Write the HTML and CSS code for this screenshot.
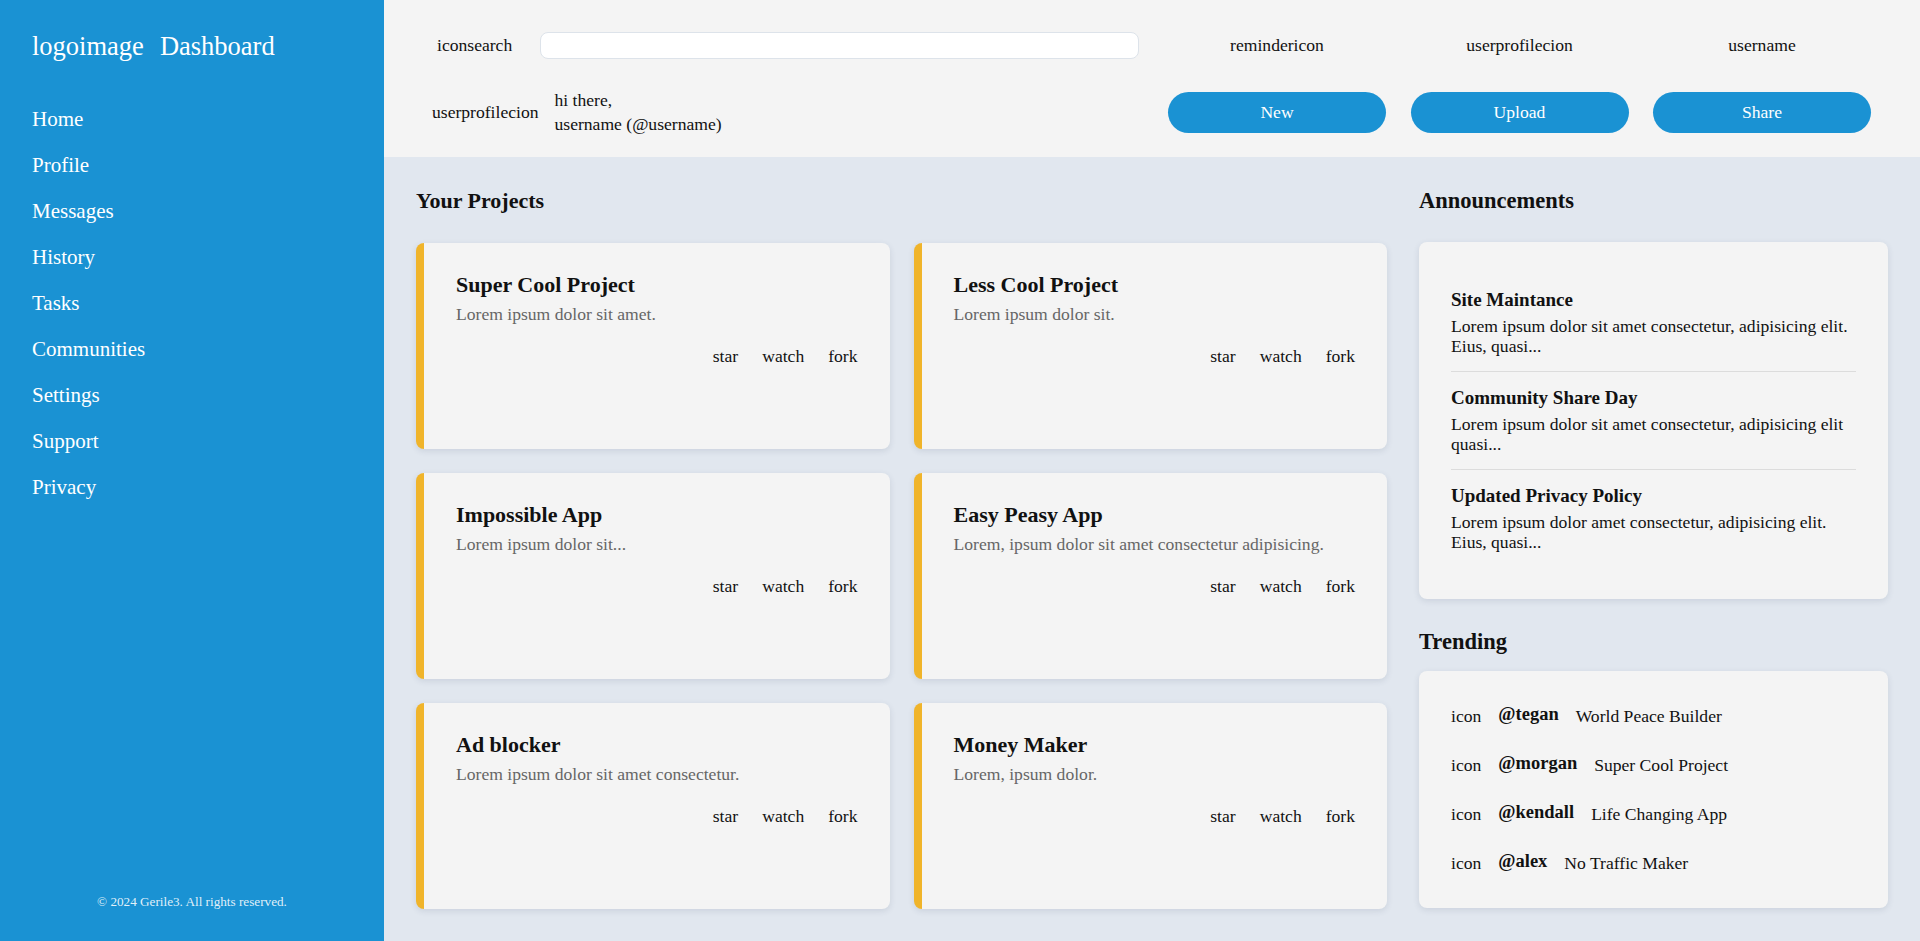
FILE: index.html
```html
<!DOCTYPE html>
<html lang="en">
<head>
<meta charset="utf-8">
<title>Dashboard</title>
<link rel="stylesheet" href="styles.css">
</head>
<body>
<div class="app">
  <aside class="sidebar">
    <div class="logo">
      <span>logoimage</span>
      <span>Dashboard</span>
    </div>
    <nav class="nav">
      <a href="#">Home</a>
      <a href="#">Profile</a>
      <a href="#">Messages</a>
      <a href="#">History</a>
      <a href="#">Tasks</a>
      <a href="#">Communities</a>
      <a href="#">Settings</a>
      <a href="#">Support</a>
      <a href="#">Privacy</a>
    </nav>
    <p class="copyright">© 2024 Gerile3. All rights reserved.</p>
  </aside>

  <div class="content">
    <header class="topbar">
      <div class="topbar-row row-top">
        <div class="search">
          <span class="search-icon">iconsearch</span>
          <input class="search-input" type="text">
        </div>
        <span class="top-cell">remindericon</span>
        <span class="top-cell">userprofilecion</span>
        <span class="top-cell">username</span>
      </div>
      <div class="topbar-row row-bottom">
        <div class="greeting">
          <span class="greeting-icon">userprofilecion</span>
          <div class="greeting-text">
            <div>hi there,</div>
            <div>username (@username)</div>
          </div>
        </div>
        <button class="btn">New</button>
        <button class="btn">Upload</button>
        <button class="btn">Share</button>
      </div>
    </header>

    <main class="main">
      <section class="projects">
        <h2 class="section-title">Your Projects</h2>
        <div class="project-grid">
          <article class="project-card">
            <h3 class="project-title">Super Cool Project</h3>
            <p class="project-desc">Lorem ipsum dolor sit amet.</p>
            <div class="project-actions"><span>star</span><span>watch</span><span>fork</span></div>
          </article>
          <article class="project-card">
            <h3 class="project-title">Less Cool Project</h3>
            <p class="project-desc">Lorem ipsum dolor sit.</p>
            <div class="project-actions"><span>star</span><span>watch</span><span>fork</span></div>
          </article>
          <article class="project-card">
            <h3 class="project-title">Impossible App</h3>
            <p class="project-desc">Lorem ipsum dolor sit...</p>
            <div class="project-actions"><span>star</span><span>watch</span><span>fork</span></div>
          </article>
          <article class="project-card">
            <h3 class="project-title">Easy Peasy App</h3>
            <p class="project-desc">Lorem, ipsum dolor sit amet consectetur adipisicing.</p>
            <div class="project-actions"><span>star</span><span>watch</span><span>fork</span></div>
          </article>
          <article class="project-card">
            <h3 class="project-title">Ad blocker</h3>
            <p class="project-desc">Lorem ipsum dolor sit amet consectetur.</p>
            <div class="project-actions"><span>star</span><span>watch</span><span>fork</span></div>
          </article>
          <article class="project-card">
            <h3 class="project-title">Money Maker</h3>
            <p class="project-desc">Lorem, ipsum dolor.</p>
            <div class="project-actions"><span>star</span><span>watch</span><span>fork</span></div>
          </article>
        </div>
      </section>

      <section class="side">
        <h2 class="section-title">Announcements</h2>
        <div class="panel announcements">
          <div class="announcement">
            <h4 class="announcement-title">Site Maintance</h4>
            <p class="announcement-text">Lorem ipsum dolor sit amet consectetur, adipisicing elit. Eius, quasi...</p>
          </div>
          <div class="announcement">
            <h4 class="announcement-title">Community Share Day</h4>
            <p class="announcement-text">Lorem ipsum dolor sit amet consectetur, adipisicing elit quasi...</p>
          </div>
          <div class="announcement">
            <h4 class="announcement-title">Updated Privacy Policy</h4>
            <p class="announcement-text">Lorem ipsum dolor amet consectetur, adipisicing elit. Eius, quasi...</p>
          </div>
        </div>

        <h2 class="section-title trending-title">Trending</h2>
        <div class="panel trending">
          <div class="trend-row"><span>icon</span><span class="handle">@tegan</span><span>World Peace Builder</span></div>
          <div class="trend-row"><span>icon</span><span class="handle">@morgan</span><span>Super Cool Project</span></div>
          <div class="trend-row"><span>icon</span><span class="handle">@kendall</span><span>Life Changing App</span></div>
          <div class="trend-row"><span>icon</span><span class="handle">@alex</span><span>No Traffic Maker</span></div>
        </div>
      </section>
    </main>
  </div>
</div>
</body>
</html>
```

FILE: styles.css
```css
* {
  box-sizing: border-box;
}

html, body {
  margin: 0;
  height: 100%;
}

body {
  font-family: "Liberation Serif", "Times New Roman", serif;
  font-size: 17.6px;
  color: #111;
  background: #e1e7ef;
}

.app {
  display: flex;
  height: 941px;
}

/* Sidebar */
.sidebar {
  width: 384px;
  flex: none;
  background: #1a92d3;
  color: #fff;
  display: flex;
  flex-direction: column;
  padding: 31px 32px 31px 32px;
}

.logo {
  display: flex;
  gap: 16px;
  font-size: 26.5px;
  line-height: 30px;
}

.nav {
  display: flex;
  flex-direction: column;
  gap: 20px;
  margin-top: 45px;
}

.nav a {
  color: #fff;
  text-decoration: none;
  font-size: 21px;
  line-height: 26px;
}

.copyright {
  margin: auto 0 0 0;
  text-align: center;
  font-size: 13.2px;
  line-height: 16px;
  color: rgba(255, 255, 255, 0.88);
}

/* Content */
.content {
  flex: 1;
  display: flex;
  flex-direction: column;
  min-width: 0;
}

.topbar {
  background: #f4f4f4;
  height: 157px;
  padding: 20px 49px 25px 48px;
  display: flex;
  flex-direction: column;
  gap: 18px;
}

.topbar-row {
  display: grid;
  grid-template-columns: 1fr 218px 218px 218px;
  column-gap: 24.5px;
  align-items: center;
}

.row-top {
  height: 50px;
}

.row-bottom {
  height: 41px;
}

.search {
  display: flex;
  align-items: center;
  gap: 28px;
  padding-left: 5px;
  padding-right: 5px;
}

.search-icon {
  flex: none;
}

.search-input {
  flex: 1;
  height: 27px;
  border: 1px solid #dde3ea;
  border-radius: 8px;
  background: #fff;
  outline: none;
}

.top-cell {
  text-align: center;
}

.greeting {
  display: flex;
  align-items: center;
  gap: 16px;
}

.greeting-text {
  line-height: 24px;
}

.btn {
  height: 41px;
  border: none;
  border-radius: 999px;
  background: #1a92d3;
  color: #fff;
  font-family: inherit;
  font-size: 17.6px;
  cursor: pointer;
}

/* Main */
.main {
  flex: 1;
  display: grid;
  grid-template-columns: 1fr 469px;
  column-gap: 32px;
  padding: 31px 32px 32px 32px;
  min-height: 0;
}

.section-title {
  margin: 0;
  font-size: 22px;
  line-height: 26px;
  font-weight: bold;
}

.projects {
  display: flex;
  flex-direction: column;
}

.projects .section-title {
  margin-bottom: 29px;
}

.project-grid {
  flex: 1;
  display: grid;
  grid-template-columns: 1fr 1fr;
  grid-template-rows: repeat(3, 1fr);
  gap: 24px;
}

.project-card {
  background: #f4f4f4;
  border-left: 8px solid #f0b42a;
  border-radius: 8px;
  box-shadow: 0 2px 6px rgba(40, 60, 90, 0.12);
  padding: 29px 32px 20px 32px;
}

.project-title {
  margin: 0 0 6px 0;
  font-size: 22px;
  line-height: 26px;
  font-weight: bold;
}

.project-desc {
  margin: 0;
  color: #666;
  line-height: 20px;
}

.project-actions {
  margin-top: 22px;
  display: flex;
  justify-content: flex-end;
  gap: 24px;
  line-height: 20px;
}

.side {
  display: flex;
  flex-direction: column;
}

.side .section-title {
  margin-bottom: 28px;
  font-size: 22.5px;
}

.side .trending-title {
  margin-top: 30px;
  margin-bottom: 16px;
}

.panel {
  background: #f4f4f4;
  border-radius: 8px;
  box-shadow: 0 2px 6px rgba(40, 60, 90, 0.12);
  padding: 32px;
}

.announcement {
  padding: 15px 0;
  border-bottom: 1px solid #dcdcdc;
}

.announcement:last-child {
  border-bottom: none;
}

.announcement-title {
  margin: 0 0 6px 0;
  font-size: 19px;
  line-height: 22px;
  font-weight: bold;
}

.announcement-text {
  margin: 0;
  line-height: 19.5px;
}

.trending {
  display: flex;
  flex-direction: column;
  gap: 23px;
}

.trend-row {
  display: flex;
  align-items: center;
  gap: 17px;
  height: 26px;
}

.handle {
  font-weight: bold;
  font-size: 18.5px;
  line-height: 22px;
  margin-bottom: 5px;
}
```
